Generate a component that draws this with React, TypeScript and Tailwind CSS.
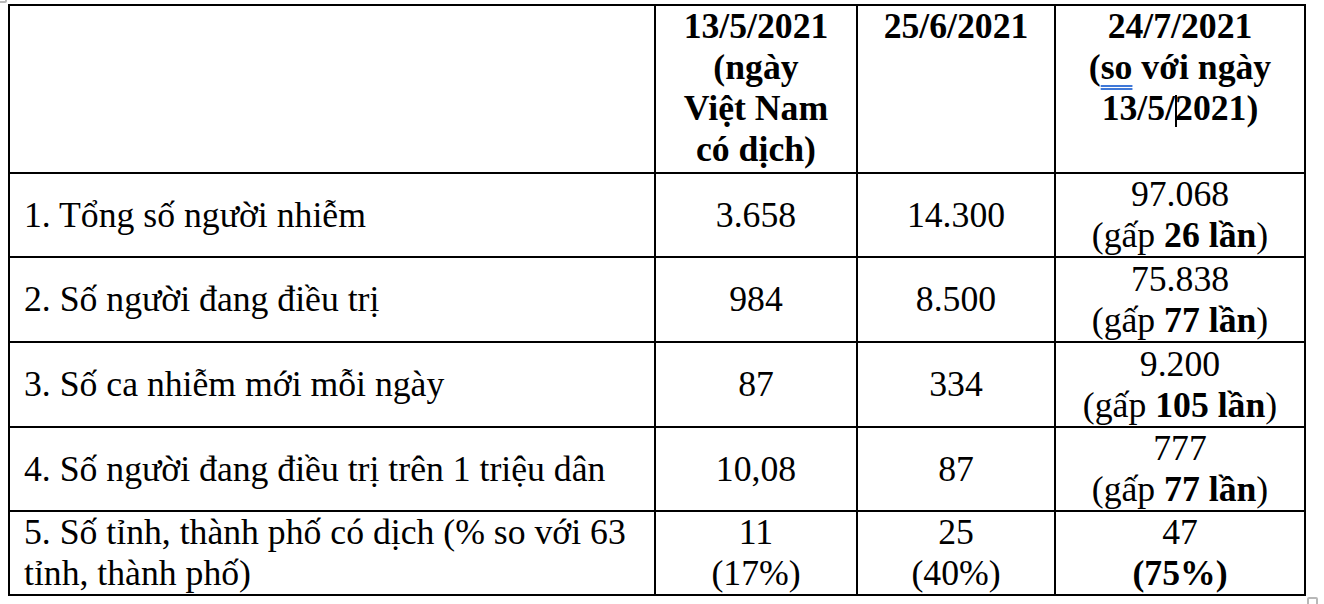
const rows: {
  label: React.ReactNode;
  a: React.ReactNode;
  b: React.ReactNode;
  c: React.ReactNode;
  h: string;
}[] = [
  {
    label: "1. Tổng số người nhiễm",
    a: "3.658",
    b: "14.300",
    c: (
      <>
        97.068
        <br />
        (gấp <b>26 lần</b>)
      </>
    ),
    h: "h-[84px]",
  },
  {
    label: "2. Số người đang điều trị",
    a: "984",
    b: "8.500",
    c: (
      <>
        75.838
        <br />
        (gấp <b>77 lần</b>)
      </>
    ),
    h: "h-[85px]",
  },
  {
    label: "3. Số ca nhiễm mới mỗi ngày",
    a: "87",
    b: "334",
    c: (
      <>
        9.200
        <br />
        (gấp <b>105 lần</b>)
      </>
    ),
    h: "h-[85px]",
  },
  {
    label: "4. Số người đang điều trị trên 1 triệu dân",
    a: "10,08",
    b: "87",
    c: (
      <>
        777
        <br />
        (gấp <b>77 lần</b>)
      </>
    ),
    h: "h-[84px]",
  },
  {
    label: (
      <>
        5. Số tỉnh, thành phố có dịch (% so với 63
        <br />
        tỉnh, thành phố)
      </>
    ),
    a: (
      <>
        11
        <br />
        (17%)
      </>
    ),
    b: (
      <>
        25
        <br />
        (40%)
      </>
    ),
    c: (
      <>
        47
        <br />
        <b>(75%)</b>
      </>
    ),
    h: "h-[84px]",
  },
];

function Cell({
  children,
  className = "",
}: {
  children?: React.ReactNode;
  className?: string;
}) {
  return (
    <div
      className={`flex border-r-2 border-b-2 border-black ${className}`}
    >
      {children}
    </div>
  );
}

export default function App() {
  return (
    <div className="relative h-[604px] w-[1324px] overflow-hidden bg-white font-['Liberation_Serif',serif] text-[35.7px] leading-[41px] text-black">
      {/* table handles */}
      <div className="absolute left-[-5px] top-[-7px] h-[10px] w-[12px] rounded-[2px] border-2 border-[#b8b8b8]" />
      <div className="absolute left-[1307px] top-[597px] h-[11px] w-[11px] rounded-[2px] border-2 border-[#b8b8b8]" />

      <div className="ml-[8px] mt-[4px] grid w-[1298px] grid-cols-[646px_202px_198px_250px] border-l-2 border-t-2 border-black">
        {/* header */}
        <Cell className="h-[168px]" />
        <Cell className="h-[168px] justify-center text-center font-bold">
          <div>
            13/5/2021
            <br />
            (ngày
            <br />
            Việt Nam
            <br />
            có dịch)
          </div>
        </Cell>
        <Cell className="h-[168px] justify-center text-center font-bold">
          <div>25/6/2021</div>
        </Cell>
        <Cell className="h-[168px] justify-center text-center font-bold">
          <div>
            24/7/2021
            <br />
            (
            <span className="underline decoration-[#3f78d8] decoration-double decoration-[length:1.5px] underline-offset-[6px]">
              so
            </span>{" "}
            với ngày
            <br />
            13/5/
            <span className="mr-[-2px] inline-block h-[32px] w-[2px] bg-black align-[-7px]" />
            2021)
          </div>
        </Cell>

        {rows.map((r, i) => (
          <Row key={i} {...r} />
        ))}
      </div>
    </div>
  );
}

function Row({
  label,
  a,
  b,
  c,
  h,
}: {
  label: React.ReactNode;
  a: React.ReactNode;
  b: React.ReactNode;
  c: React.ReactNode;
  h: string;
}) {
  return (
    <>
      <Cell className={`${h} items-center pl-[14px]`}>
        <div>{label}</div>
      </Cell>
      <Cell className={`${h} items-center justify-center text-center`}>
        <div>{a}</div>
      </Cell>
      <Cell className={`${h} items-center justify-center text-center`}>
        <div>{b}</div>
      </Cell>
      <Cell className={`${h} items-center justify-center text-center`}>
        <div>{c}</div>
      </Cell>
    </>
  );
}
